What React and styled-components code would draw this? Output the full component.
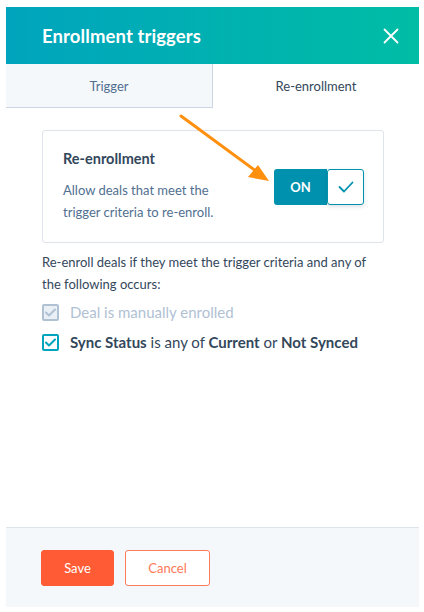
import React, { useState } from "react"
import styled, { createGlobalStyle } from "styled-components"

const GlobalStyle = createGlobalStyle`
	html, body {
		margin: 0;
		padding: 0;
		background: #fff;
		font-family: Lato, "Noto Sans", sans-serif;
		color: #33475b;
	}
`

const Page = styled.div`
	padding: 7px 5px 5px 6px;
	box-sizing: border-box;
	height: 612px;
`

const Panel = styled.div`
	display: flex;
	flex-direction: column;
	height: 600px;
	background: #fff;
`

const Header = styled.div`
	display: flex;
	align-items: center;
	justify-content: space-between;
	height: 57px;
	padding: 0 20px 0 36px;
	background: linear-gradient(to right, #00a4bd, #00bda5);
	color: #fff;

	h1 {
		margin: 0;
		font-size: 18.5px;
		font-weight: 700;
		letter-spacing: 0.1px;
	}
`

const CloseButton = styled.button`
	display: flex;
	padding: 0;
	border: 0;
	background: transparent;
	cursor: pointer;
`

const Tabs = styled.div`
	display: flex;
	height: 44px;
`

const Tab = styled.div`
	flex: 1;
	display: flex;
	align-items: center;
	justify-content: center;
	font-size: 13px;
	cursor: pointer;
	box-sizing: border-box;
	background: ${p => (p.$active ? "#fff" : "#f5f8fa")};
	color: ${p => (p.$active ? "#33475b" : "#516f90")};
	border-bottom: ${p => (p.$active ? "0" : "1px solid #cbd6e2")};
	border-right: ${p => (p.$active ? "0" : "1px solid #cbd6e2")};
`

const Body = styled.div`
	flex: 1;
	position: relative;
	padding: 22px 35px 0 36px;
`

const Card = styled.div`
	display: flex;
	align-items: center;
	justify-content: space-between;
	border: 1px solid #dfe3eb;
	border-radius: 3px;
	padding: 18px 18px 18px 20px;
	height: 113px;
	box-sizing: border-box;
`

const CardText = styled.div`
	h2 {
		margin: 0 0 12px;
		font-size: 14.5px;
		font-weight: 700;
		color: #33475b;
	}

	p {
		margin: 0;
		font-size: 13px;
		line-height: 22px;
		color: #516f90;
		max-width: 160px;
	}
`

const Toggle = styled.button`
	display: flex;
	padding: 0;
	border: 0;
	background: transparent;
	cursor: pointer;
	margin: 0 1px -1px 0;
	font-family: inherit;

	.on {
		display: flex;
		align-items: center;
		justify-content: center;
		width: 53px;
		height: 36px;
		background: #0091ae;
		color: #fff;
		font-size: 13px;
		font-weight: 700;
		border-radius: 3px 0 0 3px;
	}

	.knob {
		display: flex;
		align-items: center;
		justify-content: center;
		width: 37px;
		height: 36px;
		box-sizing: border-box;
		border: 1px solid #0091ae;
		border-radius: 3px;
		background: #fff;
		box-shadow: 0 2px 4px rgba(45, 62, 80, 0.15);
	}
`

const Arrow = styled.svg`
	position: absolute;
	left: 164px;
	top: 5px;
	pointer-events: none;
`

const Intro = styled.p`
	margin: 8px 0 0;
	font-size: 13px;
	line-height: 22px;
	color: #33475b;
`

const Option = styled.label`
	display: flex;
	align-items: center;
	gap: 11px;
	margin-top: ${p => (p.$first ? "6px" : "8px")};
	font-size: 15px;
	color: ${p => (p.$disabled ? "#b0c1d4" : "#33475b")};
	height: 22px;

	b {
		font-weight: 700;
	}
`

const Box = styled.span`
	display: flex;
	align-items: center;
	justify-content: center;
	width: 17px;
	height: 17px;
	box-sizing: border-box;
	border-radius: 2px;
	border: 2px solid ${p => (p.$disabled ? "#b0c1d4" : "#00a4bd")};
	background: ${p => (p.$disabled ? "#eaf0f6" : "#fff")};
`

const Footer = styled.div`
	display: flex;
	gap: 11px;
	height: 80px;
	padding: 22px 35px 0 35px;
	box-sizing: border-box;
	background: #f5f8fa;
	border-top: 1px solid #dfe3eb;
`

const Button = styled.button`
	height: 36px;
	padding: 0;
	width: ${p => p.$width}px;
	border-radius: 3px;
	font-family: inherit;
	font-size: 13px;
	cursor: pointer;
	background: ${p => (p.$primary ? "#ff5c35" : "#fff")};
	color: ${p => (p.$primary ? "#fff" : "#ff7a59")};
	border: 1px solid ${p => (p.$primary ? "#ff5c35" : "#ff7a59")};
`

const Check = ({ color }) => (
	<svg width="11" height="9" viewBox="0 0 11 9">
		<path d="M1 4.5 L4 7.5 L10 1.5" fill="none" stroke={color} strokeWidth="2" strokeLinecap="round" strokeLinejoin="round" />
	</svg>
)

const App = () => {
	const [tab, setTab] = useState(1)

	return (
		<Page>
			<GlobalStyle />
			<Panel>
				<Header>
					<h1>Enrollment triggers</h1>
					<CloseButton aria-label="Close">
						<svg width="16" height="16" viewBox="0 0 16 16">
							<path d="M1.5 1.5 L14.5 14.5 M14.5 1.5 L1.5 14.5" stroke="#fff" strokeWidth="1.8" strokeLinecap="round" />
						</svg>
					</CloseButton>
				</Header>
				<Tabs>
					<Tab $active={tab === 0} onClick={() => setTab(0)}>Trigger</Tab>
					<Tab $active={tab === 1} onClick={() => setTab(1)}>Re-enrollment</Tab>
				</Tabs>
				<Body>
					<Card>
						<CardText>
							<h2>Re-enrollment</h2>
							<p>Allow deals that meet the trigger criteria to re-enroll.</p>
						</CardText>
						<Toggle>
							<span className="on">ON</span>
							<span className="knob">
								<svg width="16" height="12" viewBox="0 0 16 12">
									<path d="M1.5 6 L6 10.5 L14.5 1.5" fill="none" stroke="#0091ae" strokeWidth="1.8" strokeLinecap="round" strokeLinejoin="round" />
								</svg>
							</span>
						</Toggle>
					</Card>
					<Arrow width="110" height="80" viewBox="0 0 110 80">
						<line x1="11" y1="3" x2="86" y2="58" stroke="#ff8f0e" strokeWidth="3" strokeLinecap="round" />
						<polygon points="99,68 78,64 88,52" fill="#ff8f0e" />
					</Arrow>
					<Intro>Re-enroll deals if they meet the trigger criteria and any of the following occurs:</Intro>
					<Option $first $disabled>
						<Box $disabled><Check color="#b0c1d4" /></Box>
						Deal is manually enrolled
					</Option>
					<Option>
						<Box><Check color="#00a4bd" /></Box>
						<span><b>Sync Status</b> is any of <b>Current</b> or <b>Not Synced</b></span>
					</Option>
				</Body>
				<Footer>
					<Button $primary $width={73}>Save</Button>
					<Button $width={85}>Cancel</Button>
				</Footer>
			</Panel>
		</Page>
	)
}

export default App
